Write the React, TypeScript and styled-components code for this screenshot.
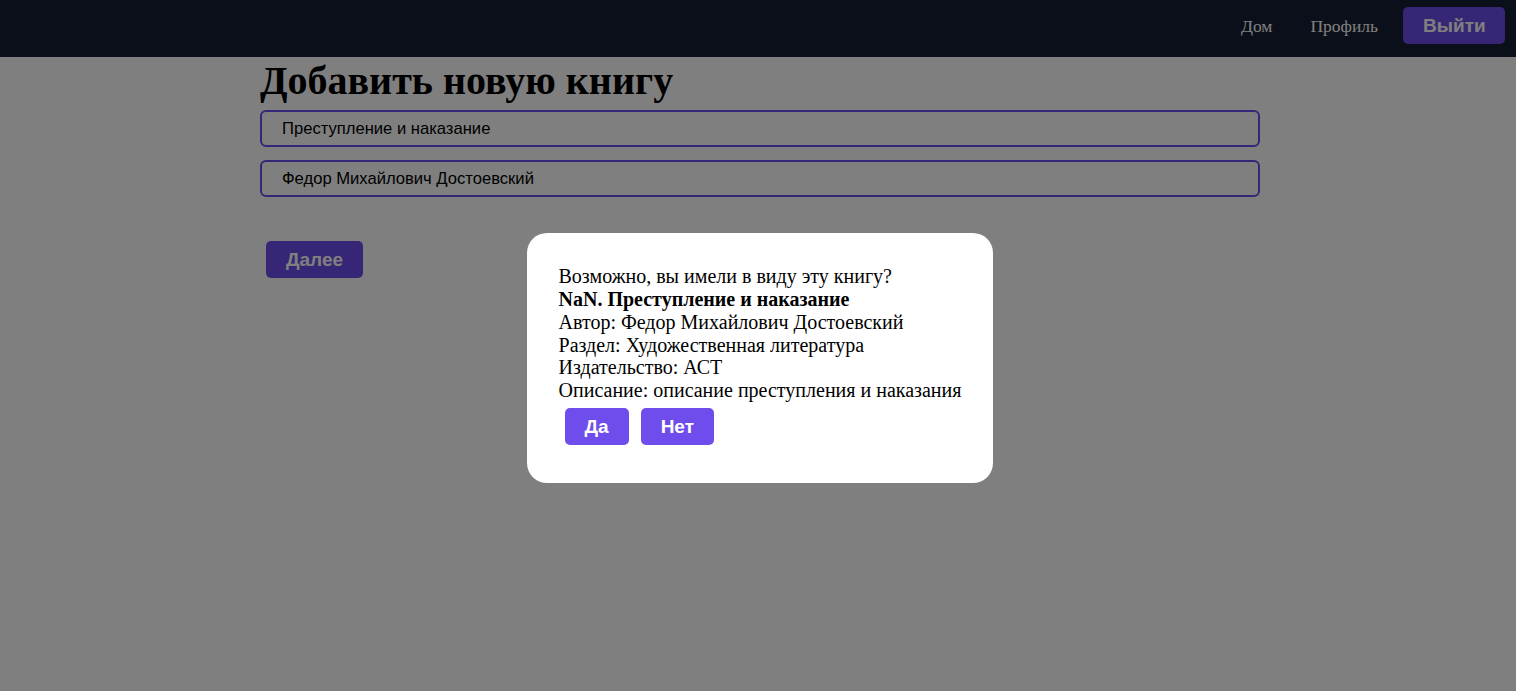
import React from "react";
import styled, { createGlobalStyle } from "styled-components";

const Global = createGlobalStyle`
  html, body { margin: 0; padding: 0; background: #ffffff; }
  body { font-family: "Liberation Serif", "Times New Roman", serif; }
`;

const PRIMARY = "#6f4cec";

const Header = styled.header`
  height: 57px;
  background: #161e32;
  display: flex;
  align-items: flex-start;
  justify-content: flex-end;
  padding: 7px 11px 0 0;
  box-sizing: border-box;
`;

const NavLink = styled.a`
  font-family: "Liberation Serif", serif;
  font-size: 17.5px;
  color: #ffffff;
  text-decoration: none;
  margin: 9px 38px 0 0;
`;

const Button = styled.button<{ $size?: number }>`
  background: ${PRIMARY};
  color: #ffffff;
  border: none;
  border-radius: 5px;
  font-family: "Liberation Sans", Arial, sans-serif;
  font-weight: bold;
  font-size: ${(p) => p.$size ?? 19}px;
  padding: 8px 20px;
  height: 37px;
  margin: 6px;
  cursor: pointer;
  line-height: 21px;
`;

const LogoutButton = styled(Button)`
  margin: 0 0 0 -13px;
  padding: 0 20px;
  width: 102px;
  height: 37px;
`;

const Main = styled.main`
  width: 1000px;
  margin-left: calc(50% - 498px);
  display: flex;
  flex-direction: column;
  align-items: flex-start;
`;

const Title = styled.h1`
  font-family: "Liberation Serif", serif;
  font-size: 40px;
  font-weight: bold;
  margin: 0 0 6px 0;
  line-height: 47px;
  color: #000;
`;

const Input = styled.input`
  width: 1000px;
  height: 37px;
  box-sizing: border-box;
  border: 2px solid ${PRIMARY};
  border-radius: 6px;
  padding: 0 20px;
  font-family: "Liberation Sans", Arial, sans-serif;
  font-size: 16.6px;
  color: #000;
  background: #fff;
  margin-bottom: 13px;
  outline: none;
`;

const NextRow = styled.div`
  margin-top: 25px;
`;

const Overlay = styled.div`
  position: fixed;
  inset: 0;
  background: rgba(0, 0, 0, 0.5);
  display: flex;
  justify-content: center;
  align-items: flex-start;
  padding-top: 233px;
  padding-left: 4px;
  box-sizing: border-box;
`;

const Modal = styled.div`
  background: #fff;
  border-radius: 20px;
  padding: 32px;
  font-family: "Liberation Serif", serif;
  font-size: 20px;
  line-height: 22.85px;
  color: #000;
`;

const Line = styled.div<{ $bold?: boolean }>`
  font-weight: ${(p) => (p.$bold ? "bold" : "normal")};
  white-space: nowrap;
`;

const Actions = styled.div`
  display: flex;
`;

export default function App() {
  return (
    <>
      <Global />
      <Header>
        <NavLink href="#">Дом</NavLink>
        <NavLink href="#">Профиль</NavLink>
        <LogoutButton>Выйти</LogoutButton>
      </Header>
      <Main>
        <Title>Добавить новую книгу</Title>
        <Input defaultValue="Преступление и наказание" />
        <Input defaultValue="Федор Михайлович Достоевский" />
        <NextRow>
          <Button>Далее</Button>
        </NextRow>
      </Main>
      <Overlay>
        <Modal>
          <Line>Возможно, вы имели в виду эту книгу?</Line>
          <Line $bold>NaN. Преступление и наказание</Line>
          <Line>Автор: Федор Михайлович Достоевский</Line>
          <Line>Раздел: Художественная литература</Line>
          <Line>Издательство: АСТ</Line>
          <Line>Описание: описание преступления и наказания</Line>
          <Actions>
            <Button>Да</Button>
            <Button>Нет</Button>
          </Actions>
        </Modal>
      </Overlay>
    </>
  );
}
